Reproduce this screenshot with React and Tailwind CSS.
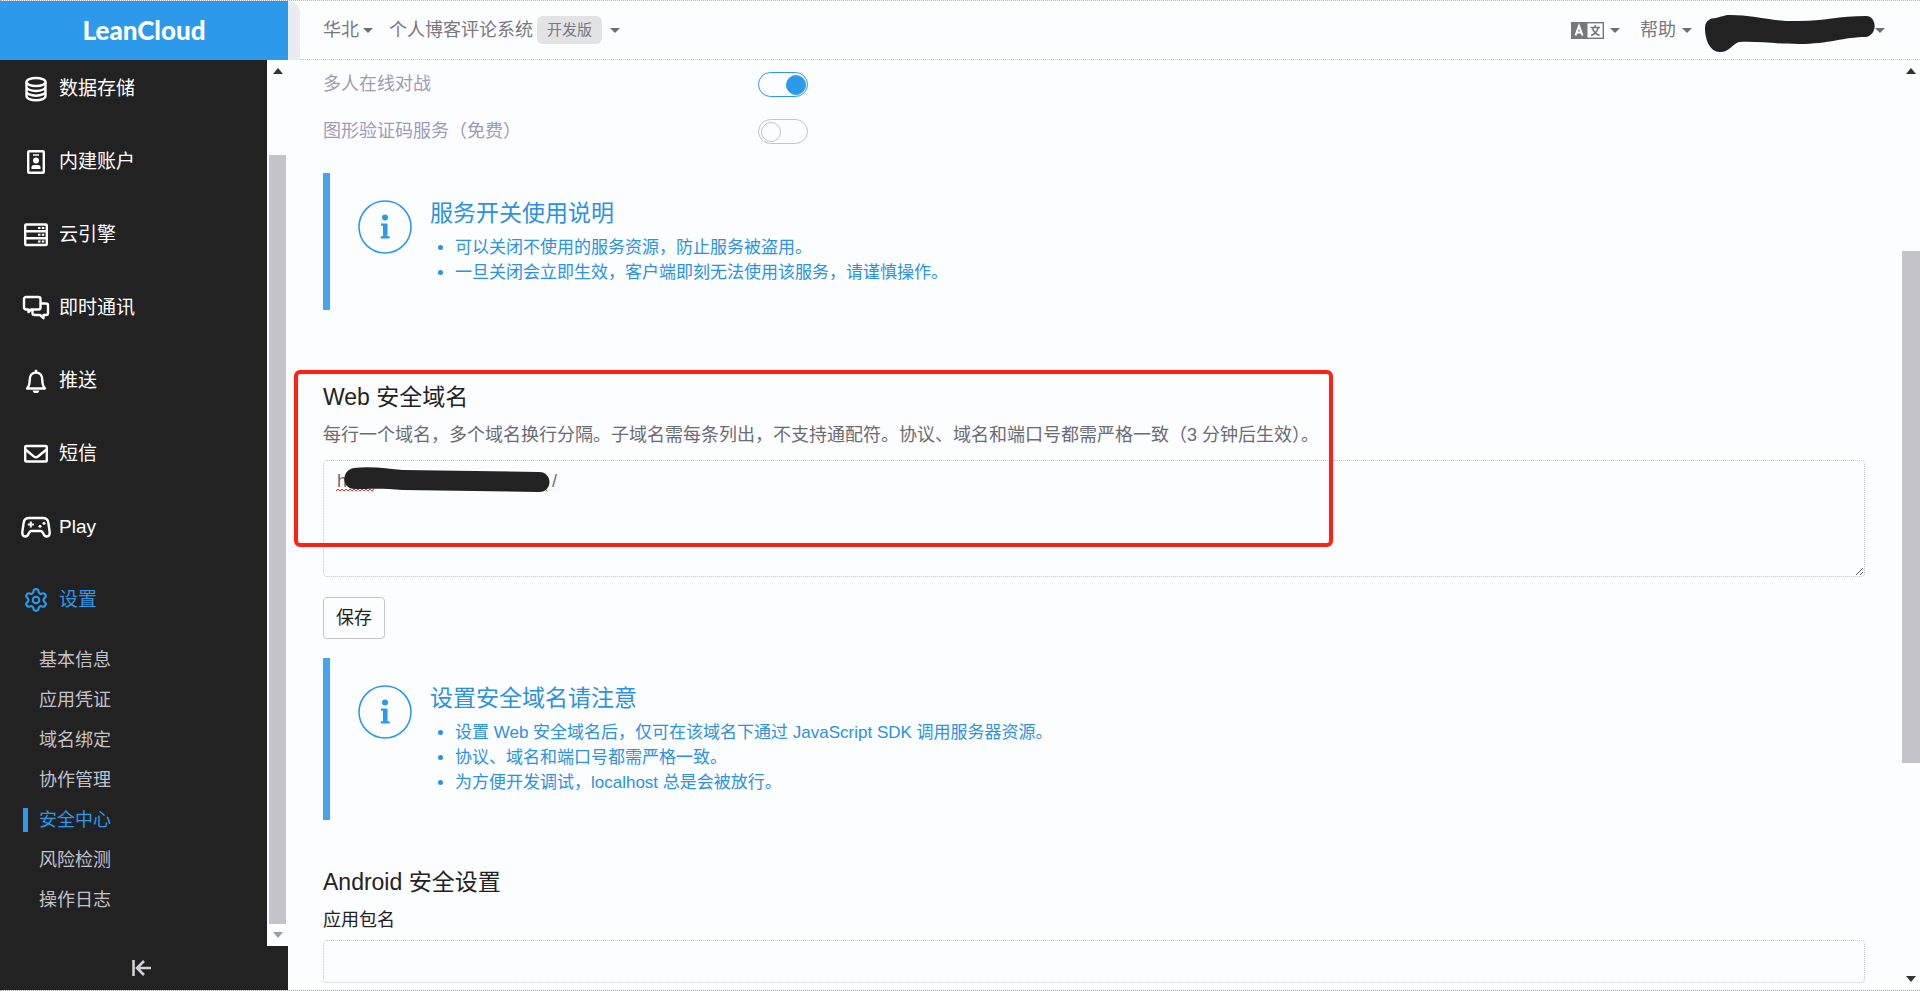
import { useState } from "react";
import clsx from "clsx";
import { Settings } from "lucide-react";

const NAV = [
  { label: "数据存储", icon: DatabaseIcon },
  { label: "内建账户", icon: AccountIcon },
  { label: "云引擎", icon: ServerIcon },
  { label: "即时通讯", icon: ChatIcon },
  { label: "推送", icon: BellIcon },
  { label: "短信", icon: MailIcon },
  { label: "Play", icon: GamepadIcon },
  { label: "设置", icon: GearIcon, active: true },
];

const SETTINGS = ["基本信息", "应用凭证", "域名绑定", "协作管理", "安全中心", "风险检测", "操作日志"];

// ── Icons ──────────────────────────────────────────────────────────────────────
function Icon({ children }) {
  return (
    <svg viewBox="0 0 32 32" className="w-8 h-8 shrink-0" fill="none" stroke="currentColor" strokeWidth="2.4" strokeLinejoin="round" aria-hidden="true">
      {children}
    </svg>
  );
}

function DatabaseIcon() {
  return (
    <Icon>
      <ellipse cx="16" cy="9" rx="9.5" ry="4" />
      <path d="M6.500 9v14c0 2.400 4.200 4.300 9.500 4.300s9.500-1.900 9.500-4.300V9M6.500 13.700c0 2.400 4.200 4.300 9.500 4.300s9.500-1.900 9.500-4.300M6.500 18.400c0 2.400 4.200 4.300 9.500 4.300s9.500-1.900 9.500-4.300" />
    </Icon>
  );
}

function AccountIcon() {
  return (
    <Icon>
      <rect x="8.200" y="5.200" width="15.600" height="21.600" rx="1" />
      <path d="M13 9h6" strokeWidth="1.500" />
      <circle cx="16" cy="14.500" r="3" fill="currentColor" stroke="none" />
      <path d="M11.500 23v-1.800c0-1.500 1.200-2.200 2.500-2.200h4c1.300 0 2.500.7 2.500 2.200V23z" fill="currentColor" stroke="none" />
    </Icon>
  );
}

function ServerIcon() {
  return (
    <Icon>
      <rect x="5.200" y="5.500" width="21.600" height="20.500" rx="1" />
      <path d="M5 12.300h22M5 19.200h22" />
      <path d="M18 9h2.500M21.800 9h2.500M18 15.800h2.500M21.800 15.800h2.500M18 22.600h2.500M21.800 22.600h2.500" strokeWidth="2" />
    </Icon>
  );
}

function ChatIcon() {
  return (
    <Icon>
      <path d="M6 5h12.500a2 2 0 0 1 2 2v8.500a2 2 0 0 1-2 2h-7.300L8.500 20v-2.500H6a2 2 0 0 1-2-2V7a2 2 0 0 1 2-2z" />
      <path d="M20.500 11.500H26a2 2 0 0 1 2 2V21a2 2 0 0 1-2 2h-2.500v3.200L20 23h-5.500a2 2 0 0 1-2-2v-3.500" />
    </Icon>
  );
}

function BellIcon() {
  return (
    <Icon>
      <path d="M7 23.500c2-2 2.700-4 2.700-8.500 0-4.500 2.300-7.500 6.300-7.500s6.300 3 6.300 7.500c0 4.500.7 6.500 2.700 8.500z" />
      <path d="M16 7.500V4.800" />
      <path d="M12.800 25.500h6.400a3.200 2.600 0 0 1-6.400 0z" fill="currentColor" stroke="none" />
    </Icon>
  );
}

function MailIcon() {
  return (
    <Icon>
      <rect x="5.200" y="8" width="21.600" height="15.500" rx="1" />
      <path d="M5.500 11.500l8.200 6.800c1.500 1.200 3.100 1.200 4.600 0l8.200-6.800" />
    </Icon>
  );
}

function GamepadIcon() {
  return (
    <Icon>
      <path d="M9 7h14c3 0 4.800 1.500 5.300 4.500l1.300 9c.5 3-.7 5-2.700 5-1.800 0-2.800-1-3.500-2.800L22.300 21c-.3-.7-.8-1-1.500-1h-9.600c-.7 0-1.200.3-1.500 1l-1.100 1.700C7.900 24.500 6.900 25.500 5.100 25.500c-2 0-3.200-2-2.700-5l1.300-9C4.200 8.500 6 7 9 7z" />
      <path d="M10.800 10.500v6M7.800 13.500h6" strokeWidth="2" />
      <circle cx="24" cy="12.300" r="1.500" fill="currentColor" stroke="none" />
      <circle cx="20" cy="15.300" r="1.500" fill="currentColor" stroke="none" />
    </Icon>
  );
}

function GearIcon() {
  return (
    <span className="w-8 h-8 shrink-0 flex items-center justify-center">
      <Settings size={26} strokeWidth={2} aria-hidden="true" />
    </span>
  );
}

function Caret() {
  return (
    <svg viewBox="0 0 10 5" className="w-[10px] h-[5px] shrink-0" fill="#6b6b72" aria-hidden="true">
      <path d="M0 0h10L5 5z" />
    </svg>
  );
}

function ScrollArrow({ down, className }) {
  return (
    <svg viewBox="0 0 10 6" className={clsx("w-[10px] h-[6px] shrink-0", down && "rotate-180", className)} fill="currentColor" aria-hidden="true">
      <path d="M0 6h10L5 0z" />
    </svg>
  );
}

// ── Pieces ─────────────────────────────────────────────────────────────────────
function Toggle({ id, label, defaultChecked }) {
  return (
    <div className="flex items-center h-[47px]">
      <label htmlFor={id} className="w-[435px] text-[#9c9cb4]">{label}</label>
      <span className="relative flex">
        <input
          id={id}
          type="checkbox"
          defaultChecked={defaultChecked}
          className="peer appearance-none w-[50px] h-[25px] rounded-full border border-[#c3c3c9] checked:border-[#2c99ea]"
        />
        <span className="pointer-events-none absolute top-[3px] left-[3px] w-5 h-5 rounded-full border border-[#c3c3c9] peer-checked:left-[28px] peer-checked:border-[#2c99ea] peer-checked:bg-[#2c99ea]" />
      </span>
    </div>
  );
}

function Notice({ title, items }) {
  return (
    <section className="flex border-l-[7px] border-[#45a4ec] pl-7 pt-6 pb-[25px] text-[#2c91e0]">
      <svg viewBox="0 0 54 54" className="w-[54px] h-[54px] mt-[3px] shrink-0" aria-hidden="true">
        <circle cx="27" cy="27" r="26" fill="none" stroke="#2c99ea" strokeWidth="1.600" />
        <circle cx="27" cy="17.500" r="3" fill="#2c99ea" />
        <path d="M23 23.500h6.500v12.800h2.200v2.200H22.800v-2.200H25V25.700h-2z" fill="#2c99ea" />
      </svg>
      <div className="ml-[18px]">
        <h3 className="text-[23px] leading-8">{title}</h3>
        <ul className="list-disc pl-[25px] mt-[6px] text-[17px] leading-[25px]">
          {items.map(item => <li key={item}>{item}</li>)}
        </ul>
      </div>
    </section>
  );
}

function Header() {
  return (
    <header className="flex h-[60px] shrink-0 border-t border-dotted border-[#b5b5ba]">
      <a href="#home" className="w-[288px] shrink-0 bg-[#2c99ea] flex items-center justify-center text-white text-[26px] font-black font-[Lato,sans-serif]">
        LeanCloud
      </a>
      <div className="w-3 shrink-0 rounded-tr-xl bg-[#ececf0]" />
      <div className="flex-1 flex items-center pl-[23px] pr-[35px] border-b border-dotted border-[#c3c3c9] text-[#77777f]">
        <button className="flex items-center gap-1">华北 <Caret /></button>
        <button className="flex items-center gap-1 ml-4">
          个人博客评论系统
          <span className="h-7 px-[10px] rounded-md bg-[#e3e3e6] text-[15px] leading-7">开发版</span>
          <span className="ml-1"><Caret /></span>
        </button>
        <button aria-label="语言" className="flex items-center gap-[6px] ml-auto">
          <svg viewBox="0 0 33 17" className="w-[33px] h-[17px]" aria-hidden="true">
            <rect x=".7" y=".7" width="31.600" height="15.600" fill="#fcfdff" stroke="#77777f" strokeWidth="1.400" />
            <path d="M0 0h16.500v17H0z" fill="#77777f" />
            <path d="M4.500 13.500L8 4l3.500 9.500M5.800 10.500h4.400" fill="none" stroke="#fff" strokeWidth="2" />
            <path d="M19.500 5.500h9.500M24.200 3v2.500M27 6c-.8 3.500-3 6-7 7.500M21.500 6c.8 3.500 3 6 7 7.500" fill="none" stroke="#77777f" strokeWidth="1.500" />
          </svg>
          <Caret />
        </button>
        <button className="flex items-center gap-[6px] ml-5">帮助 <Caret /></button>
        <button aria-label="账户" className="flex items-center ml-3">
          <svg viewBox="0 -8 171 46" className="w-[171px] h-[46px]" fill="#222" aria-hidden="true">
            <path d="M1 13C1 6 6 3 12 3C17 2 20 0 26 0C50 0 70 7 95 6C120 6 135 1 162 1C173 1 174 20 162 22C140 22 125 29 95 29C70 29 55 26 35 27C28 29 26 37 16 37C6 37 1 25 1 13z" />
          </svg>
          <Caret />
        </button>
      </div>
    </header>
  );
}

function Sidebar() {
  return (
    <aside className="w-[288px] shrink-0 flex flex-col bg-[#222] text-white">
      <div className="flex-1 min-h-0 flex">
        <nav className="flex-1 min-w-0 overflow-hidden text-[19px] pt-[2px]">
          {NAV.map(({ label, icon: NavIcon, active }) => (
            <a
              key={label}
              href={"#" + label}
              className={clsx("flex items-center gap-[7px] pl-5 h-[73px] -mt-[10px] mb-[10px]", active && "text-[#2c99ea]")}
            >
              <NavIcon />
              {label}
            </a>
          ))}
          <ul className="text-[18px] text-[#c3c3cb] -mt-[6px]">
            {SETTINGS.map(label => (
              <li key={label} className="h-10 flex items-center">
                <a
                  href={"#" + label}
                  className={clsx(
                    "border-l-[5px] ml-[23px] pl-[11px] leading-6",
                    label === "安全中心" ? "border-[#2c99ea] text-[#2c99ea]" : "border-transparent"
                  )}
                >
                  {label}
                </a>
              </li>
            ))}
          </ul>
        </nav>
        <div className="w-[21px] bg-[#fcfdff] flex flex-col items-center pt-2 pb-2">
          <ScrollArrow className="text-[#333]" />
          <div className="w-[17px] flex-1 mt-[81px] mb-2 bg-[#c3c3c9]" />
          <ScrollArrow down className="text-[#9a9ab5]" />
        </div>
      </div>
      <button aria-label="收起" className="h-11 shrink-0 flex items-center justify-center text-[#d0d0d8]">
        <svg viewBox="0 0 20 18" className="w-5 h-[18px] -ml-1" fill="none" stroke="currentColor" strokeWidth="2.600" aria-hidden="true">
          <path d="M1.500 1v16M19 9H5M12 2L5 9l7 7" />
        </svg>
      </button>
    </aside>
  );
}

export default function App() {
  const [domains, setDomains] = useState("h                                         /");

  return (
    <div className="h-screen flex flex-col overflow-hidden bg-[#fcfdff] text-[18px] leading-[25px] text-[#222] font-['Liberation_Sans','Noto_Sans_CJK_SC',sans-serif] border-b border-dotted border-[#9a9ab5]">
      <Header />
      <div className="flex-1 min-h-0 flex">
        <Sidebar />
        <main className="flex-1 min-w-0 pt-px pl-[35px] pr-[37px]">
          <Toggle id="battle" label="多人在线对战" defaultChecked />
          <Toggle id="captcha" label="图形验证码服务（免费）" />

          <div className="mt-[18px]">
            <Notice
              title="服务开关使用说明"
              items={["可以关闭不使用的服务资源，防止服务被盗用。", "一旦关闭会立即生效，客户端即刻无法使用该服务，请谨慎操作。"]}
            />
          </div>

          {/* ── Web domains ── */}
          <section className="relative mt-[71px]">
            <h2 className="text-[23px] leading-8">Web 安全域名</h2>
            <label htmlFor="domains" className="block mt-[10px] text-[#6b6b72]">
              每行一个域名，多个域名换行分隔。子域名需每条列出，不支持通配符。协议、域名和端口号都需严格一致（3 分钟后生效）。
            </label>
            <textarea
              id="domains"
              value={domains}
              onChange={e => setDomains(e.target.value)}
              className="block w-full h-[117px] mt-3 px-[13px] py-2 rounded border border-dotted border-[#c3c3c9] text-[#6b6b72]"
            />
            <svg viewBox="-8 0 218 26" className="pointer-events-none absolute left-3 top-[86px] w-[218px] h-[26px]" fill="none" aria-hidden="true">
              <path d="M-7 24l2-2 2 2 2-2 2 2 2-2 2 2 2-2 2 2 2-2 2 2 2-2 2 2 2-2 2 2 2-2 2 2 2-2 2 2 2-2M196 24l2-2 2 2 2-2 2 2" stroke="#ff2114" />
              <path d="M11 1C30 -1 45 2 60 3L196 5C210 5 210 25 196 25L60 23C40 21 25 22 12 22C-2 22-2 3 11 1z" fill="#222" />
            </svg>
            <div className="pointer-events-none absolute -left-[29px] -top-[11px] w-[1039px] h-[177px] rounded-md border-4 border-[#ff2114]" />
          </section>
          <button className="mt-5 h-[42px] px-[12px] rounded border border-[#c3c3c9]">保存</button>

          <div className="mt-[19px]">
            <Notice
              title="设置安全域名请注意"
              items={[
                "设置 Web 安全域名后，仅可在该域名下通过 JavaScript SDK 调用服务器资源。",
                "协议、域名和端口号都需严格一致。",
                "为方便开发调试，localhost 总是会被放行。",
              ]}
            />
          </div>

          {/* ── Android ── */}
          <h2 className="mt-[46px] text-[23px] leading-8">Android 安全设置</h2>
          <label htmlFor="package" className="block mt-[10px]">应用包名</label>
          <input id="package" className="block w-full h-[43px] mt-[7px] px-[13px] rounded border border-dotted border-[#c3c3c9]" />
        </main>
        <div className="w-[18px] shrink-0 flex flex-col items-center pt-2 pb-2">
          <ScrollArrow className="text-[#333]" />
          <div className="w-full h-[512px] mt-[177px] bg-[#c3c3c9]" />
          <ScrollArrow down className="mt-auto text-[#333]" />
        </div>
      </div>
    </div>
  );
}
